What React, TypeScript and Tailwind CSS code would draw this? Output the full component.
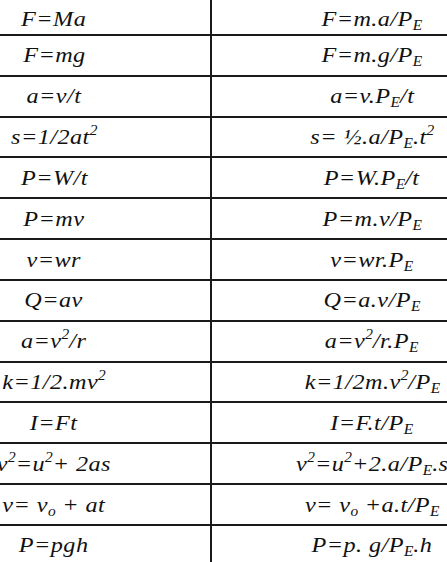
import React from "react";

const Sub = ({ children }: { children: React.ReactNode }) => (
  <sub className="text-[14px] relative top-[4px] tracking-normal">{children}</sub>
);
const Sup = ({ children }: { children: React.ReactNode }) => (
  <sup className="text-[14px] relative top-[-9px] tracking-normal">{children}</sup>
);

type Row = { l: React.ReactNode; r: React.ReactNode };

const rows: Row[] = [
  { l: <>F=Ma</>, r: <>F=m.a/P<Sub>E</Sub></> },
  { l: <>F=mg</>, r: <>F=m.g/P<Sub>E</Sub></> },
  { l: <>a=v/t</>, r: <>a=v.P<Sub>E</Sub>/t</> },
  { l: <>s=1/2at<Sup>2</Sup></>, r: <>s= ½.a/P<Sub>E</Sub>.t<Sup>2</Sup></> },
  { l: <>P=W/t</>, r: <>P=W.P<Sub>E</Sub>/t</> },
  { l: <>P=mv</>, r: <>P=m.v/P<Sub>E</Sub></> },
  { l: <>v=wr</>, r: <>v=wr.P<Sub>E</Sub></> },
  { l: <>Q=av</>, r: <>Q=a.v/P<Sub>E</Sub></> },
  { l: <>a=v<Sup>2</Sup>/r</>, r: <>a=v<Sup>2</Sup>/r.P<Sub>E</Sub></> },
  { l: <>k=1/2.mv<Sup>2</Sup></>, r: <>k=1/2m.v<Sup>2</Sup>/P<Sub>E</Sub></> },
  { l: <>I=Ft</>, r: <>I=F.t/P<Sub>E</Sub></> },
  { l: <>v<Sup>2</Sup>=u<Sup>2</Sup>+ 2as</>, r: <>v<Sup>2</Sup>=u<Sup>2</Sup>+2.a/P<Sub>E</Sub>.s</> },
  { l: <>v= v<Sub>o</Sub> + at</>, r: <>v= v<Sub>o</Sub> +a.t/P<Sub>E</Sub></> },
  { l: <>P=pgh</>, r: <>P=p. g/P<Sub>E</Sub>.h</> },
];

export default function App() {
  return (
    <div className="w-[447px] h-[562px] overflow-hidden bg-white font-['Liberation_Serif'] italic text-[#111]">
      {rows.map((row, i) => (
        <div
          key={i}
          className={`flex border-b-2 border-[#1a1a1a] ${i === 0 ? "h-[36px]" : "h-[40.83px]"}`}
        >
          <div className={`w-[212px] shrink-0 border-r-2 border-[#1a1a1a] flex items-center ${i === 0 ? "pt-[4px]" : ""}`}>
            <div className="w-[108px] flex justify-center whitespace-nowrap">
              <span className="inline-block scale-x-110 font-['Liberation_Serif'] italic text-[22px] leading-none tracking-[0.4px]">{row.l}</span>
            </div>
          </div>
          <div className={`flex-1 flex items-center ${i === 0 ? "pt-[4px]" : ""}`}>
            <div className="w-[320px] flex justify-center whitespace-nowrap">
              <span className="inline-block scale-x-110 font-['Liberation_Serif'] italic text-[22px] leading-none tracking-[0.4px]">{row.r}</span>
            </div>
          </div>
        </div>
      ))}
    </div>
  );
}
